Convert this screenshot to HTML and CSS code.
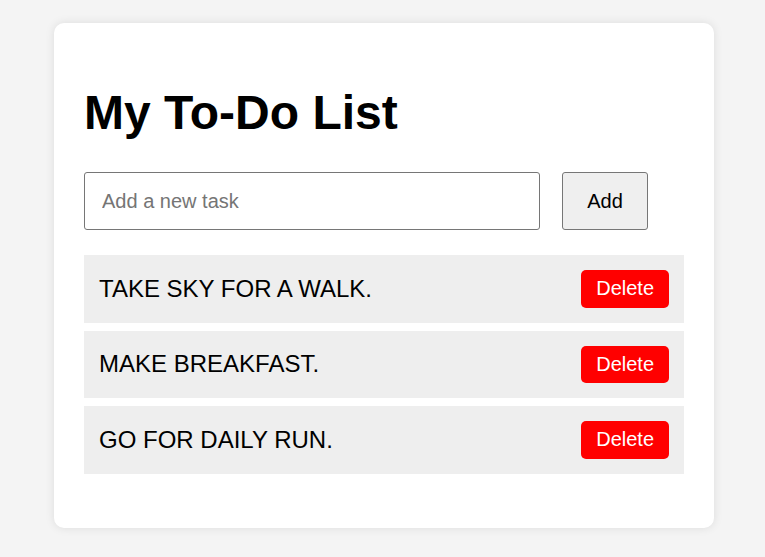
FILE: index.html
```html
<!DOCTYPE html>
<html lang="en">
<head>
<meta charset="utf-8">
<title>My To-Do List</title>
<link rel="stylesheet" href="styles.css">
</head>
<body>
<div class="card">
  <h1 class="title">My To-Do List</h1>
  <div class="add-row">
    <input class="task-input" type="text" placeholder="Add a new task">
    <button class="add-btn" type="button">Add</button>
  </div>
  <ul class="tasks">
    <li class="task"><span class="task-text">TAKE SKY FOR A WALK.</span><button class="del-btn" type="button">Delete</button></li>
    <li class="task"><span class="task-text">MAKE BREAKFAST.</span><button class="del-btn" type="button">Delete</button></li>
    <li class="task"><span class="task-text">GO FOR DAILY RUN.</span><button class="del-btn" type="button">Delete</button></li>
  </ul>
</div>
</body>
</html>
```

FILE: styles.css
```css
html, body {
  margin: 0;
  padding: 0;
}
body {
  background: #f4f4f4;
  font-family: "Liberation Sans", Arial, sans-serif;
  color: #000;
  height: 557px;
  overflow: hidden;
}
.card {
  box-sizing: border-box;
  width: 660px;
  margin: 23px 0 0 54px;
  padding: 30px;
  background: #fff;
  border-radius: 10px;
  box-shadow: 0 0 10px rgba(0, 0, 0, 0.1);
}
.title {
  font-size: 48px;
  font-weight: bold;
  line-height: 55px;
  margin: 32px 0 32px;
}
.add-row {
  display: flex;
  gap: 22px;
  margin-bottom: 25px;
}
.task-input {
  box-sizing: border-box;
  width: 456px;
  height: 58px;
  padding: 0 17px;
  font-family: "Liberation Sans", Arial, sans-serif;
  font-size: 20px;
  border: 1px solid #767676;
  border-radius: 3px;
  outline: none;
  color: #000;
}
.task-input::placeholder {
  color: #757575;
}
.add-btn {
  box-sizing: border-box;
  width: 86px;
  height: 58px;
  padding: 0;
  font-family: "Liberation Sans", Arial, sans-serif;
  font-size: 20px;
  color: #000;
  background: #efefef;
  border: 1px solid #767676;
  border-radius: 3px;
}
.tasks {
  list-style: none;
  margin: 0 0 24px;
  padding: 0;
  display: flex;
  flex-direction: column;
  gap: 8px;
}
.task {
  display: flex;
  align-items: center;
  justify-content: space-between;
  background: #eeeeee;
  padding: 15px;
}
.task-text {
  font-size: 24px;
}
.del-btn {
  box-sizing: border-box;
  height: 37.5px;
  padding: 0 15px;
  font-family: "Liberation Sans", Arial, sans-serif;
  font-size: 20px;
  color: #fff;
  background: #ff0000;
  border: none;
  border-radius: 5px;
}
```
